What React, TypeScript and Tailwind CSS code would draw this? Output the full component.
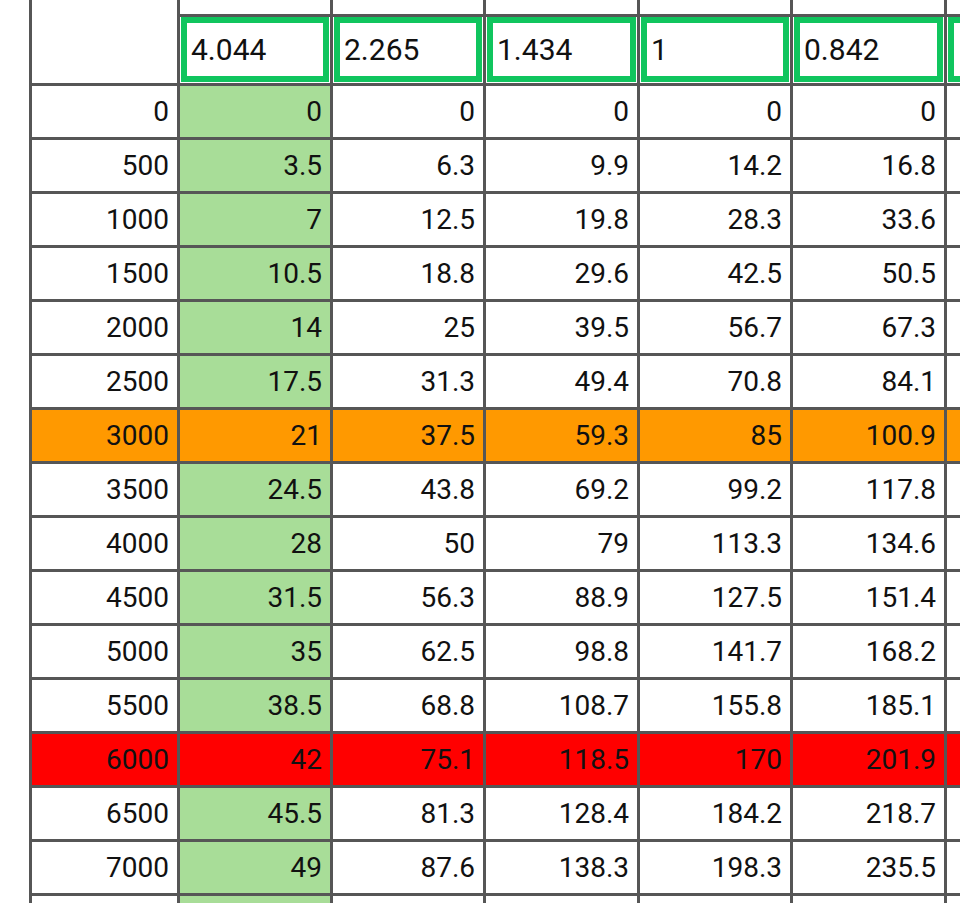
import React from "react"

const ratios = ["4.044", "2.265", "1.434", "1", "0.842", ""]

// speed per gear column, one row each 500 rpm
const rows: { rpm: number; vals: string[] }[] = [
  { rpm: 0, vals: ["0", "0", "0", "0", "0", ""] },
  { rpm: 500, vals: ["3.5", "6.3", "9.9", "14.2", "16.8", ""] },
  { rpm: 1000, vals: ["7", "12.5", "19.8", "28.3", "33.6", ""] },
  { rpm: 1500, vals: ["10.5", "18.8", "29.6", "42.5", "50.5", ""] },
  { rpm: 2000, vals: ["14", "25", "39.5", "56.7", "67.3", ""] },
  { rpm: 2500, vals: ["17.5", "31.3", "49.4", "70.8", "84.1", ""] },
  { rpm: 3000, vals: ["21", "37.5", "59.3", "85", "100.9", ""] },
  { rpm: 3500, vals: ["24.5", "43.8", "69.2", "99.2", "117.8", ""] },
  { rpm: 4000, vals: ["28", "50", "79", "113.3", "134.6", ""] },
  { rpm: 4500, vals: ["31.5", "56.3", "88.9", "127.5", "151.4", ""] },
  { rpm: 5000, vals: ["35", "62.5", "98.8", "141.7", "168.2", ""] },
  { rpm: 5500, vals: ["38.5", "68.8", "108.7", "155.8", "185.1", ""] },
  { rpm: 6000, vals: ["42", "75.1", "118.5", "170", "201.9", ""] },
  { rpm: 6500, vals: ["45.5", "81.3", "128.4", "184.2", "218.7", ""] },
  { rpm: 7000, vals: ["49", "87.6", "138.3", "198.3", "235.5", ""] },
]

function rowBg(rpm: number, col: number) {
  if (rpm === 3000) return "bg-[#ff9900]"
  if (rpm === 6000) return "bg-[#ff0000]"
  if (col === 1) return "bg-[#a8dd98]"
  return "bg-white"
}

export default function App() {
  return (
    <div className="w-[960px] h-[903px] overflow-hidden bg-white font-['Roboto',sans-serif] text-[28px] text-[#111]">
      <div className="ml-[29px] w-max grid grid-cols-[145px_150px_150px_151px_150px_151px_150px] grid-rows-[14px_66px_repeat(16,51px)] gap-[3px] pl-[3px] bg-[#565656]">
        <div className="row-span-2 bg-white" />
        {ratios.map((_, i) => (
          <div key={"h" + i} className="bg-white" />
        ))}
        {ratios.map((r, i) => (
          <div key={"in" + i} className="bg-white px-[1px] pb-[1px]">
            <div className="h-full p-[6px] bg-[#10c55e]">
              <input
                defaultValue={r}
                className="w-full h-full bg-white pl-[4px] text-[30px] leading-none text-[#111] outline-none"
              />
            </div>
          </div>
        ))}
        {rows.map((row) => (
          <React.Fragment key={row.rpm}>
            <div className={`${rowBg(row.rpm, 0)} flex items-center justify-end pr-2`}>
              {row.rpm}
            </div>
            {row.vals.map((v, i) => (
              <div
                key={i}
                className={`${rowBg(row.rpm, i + 1)} flex items-center justify-end pr-2`}
              >
                {v}
              </div>
            ))}
          </React.Fragment>
        ))}
        {/* next row, only its top edge shows */}
        {[0, 1, 2, 3, 4, 5, 6].map((i) => (
          <div key={"t" + i} className={rowBg(7500, i)} />
        ))}
      </div>
    </div>
  )
}
